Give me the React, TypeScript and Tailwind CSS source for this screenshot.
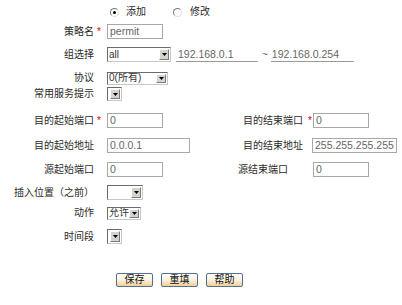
import React from "react";

const Star = () => <span className="text-[#e00000] text-[10px] leading-none">*</span>;

function Select({ w, h = 15, text }: { w: number; h?: number; text?: string }) {
  return (
    <div
      className="flex border border-t-[#6b6b6b] border-l-[#6b6b6b] border-r-[#c8c8c8] border-b-[#c8c8c8] bg-white shrink-0"
      style={{ width: w, height: h }}
    >
      <div className="flex-1 flex items-center pl-[1px] text-[10px] text-[#333] overflow-hidden whitespace-nowrap leading-none">
        {text}
      </div>
      <div className="w-[10px] my-[1px] mr-[1px] flex items-center justify-center bg-[#d6d3ce] border border-t-white border-l-white border-r-[#7b7b7b] border-b-[#7b7b7b] shrink-0">
        <svg width="5" height="3" viewBox="0 0 5 3">
          <path d="M0 0h5L2.5 3z" fill="#000" />
        </svg>
      </div>
    </div>
  );
}

function Input({ w, text }: { w: number; text: string }) {
  return (
    <div
      className="h-[15px] border border-[#a8a8a8] bg-white flex items-center pl-[2px] text-[10.5px] text-[#666] leading-none shrink-0"
      style={{ width: w }}
    >
      {text}
    </div>
  );
}

function Label({ children, star }: { children: React.ReactNode; star?: boolean }) {
  return (
    <>
      <div className="w-[94px] text-right shrink-0 text-[10px] text-[#2a2a2a] leading-none whitespace-nowrap">{children}</div>
      <div className="w-[13px] shrink-0 pl-[3px] flex items-center">{star && <Star />}</div>
    </>
  );
}

function Btn({ children }: { children: React.ReactNode }) {
  return (
    <div className="w-[37px] h-[14px] border border-[#54708f] rounded-[2px] bg-gradient-to-b from-white via-[#fbf1de] to-[#f0cf98] flex items-center justify-center text-[10px] text-[#111] leading-none">
      {children}
    </div>
  );
}

function Radio({ checked }: { checked?: boolean }) {
  return (
    <div className="w-[9px] h-[9px] rounded-full border border-t-[#7a7a7a] border-l-[#7a7a7a] border-r-[#e0e0e0] border-b-[#e0e0e0] bg-white flex items-center justify-center">
      {checked && <div className="w-[3px] h-[3px] rounded-full bg-black" />}
    </div>
  );
}

export default function App() {
  return (
    <div className="w-[402px] h-[305px] bg-white font-['Liberation_Sans','Noto_Sans_CJK_SC',sans-serif] flex flex-col pt-[5px] overflow-hidden">
      <div className="h-[14px] flex items-center pl-[110px] text-[10px] text-[#2a2a2a] leading-none">
        <Radio checked />
        <span className="ml-[7px]">添加</span>
        <div className="ml-[27px]"><Radio /></div>
        <span className="ml-[8px]">修改</span>
      </div>

      <div className="mt-[5px] h-[15px] flex items-center">
        <Label star>策略名</Label>
        <Input w={56} text="permit" />
      </div>

      <div className="mt-[8px] h-[15px] flex items-center">
        <Label>组选择</Label>
        <Select w={64} text="all" />
        <div className="ml-[5px] w-[82px] h-[15px] border-b border-[#9a9a9a] text-[10.5px] text-[#666] leading-none flex items-center pl-[2px]">192.168.0.1</div>
        <span className="ml-[4px] mr-[3px] text-[10px] text-[#666]">~</span>
        <div className="w-[83px] h-[15px] border-b border-[#9a9a9a] text-[10.5px] text-[#666] leading-none flex items-center pl-[1px]">192.168.0.254</div>
      </div>

      <div className="mt-[10px] h-[12px] flex items-center">
        <Label>协议</Label>
        <Select w={61} h={13} text="0(所有)" />
      </div>

      <div className="mt-[3px] h-[14px] flex items-center">
        <Label>常用服务提示</Label>
        <Select w={15} h={14} />
      </div>

      <div className="mt-[12px] h-[15px] flex items-center">
        <div className="w-[238px] flex items-center shrink-0">
          <Label star>目的起始端口</Label>
          <Input w={56} text="0" />
        </div>
        <div className="w-[75px] flex items-center justify-between pl-[5px] pr-[1px] text-[10px] text-[#2a2a2a] leading-none">
          <span>目的结束端口</span>
          <Star />
        </div>
        <Input w={56} text="0" />
      </div>

      <div className="mt-[10px] h-[15px] flex items-center">
        <div className="w-[238px] flex items-center shrink-0">
          <Label>目的起始地址</Label>
          <Input w={83} text="0.0.0.1" />
        </div>
        <div className="w-[74px] pl-[5px] text-[10px] text-[#2a2a2a] leading-none">目的结束地址</div>
        <Input w={85} text="255.255.255.255" />
      </div>

      <div className="mt-[9px] h-[15px] flex items-center">
        <div className="w-[238px] flex items-center shrink-0">
          <Label>源起始端口</Label>
          <Input w={56} text="0" />
        </div>
        <div className="w-[75px] text-[10px] text-[#2a2a2a] leading-none">源结束端口</div>
        <Input w={56} text="0" />
      </div>

      <div className="mt-[8px] h-[15px] flex items-center">
        <Label>插入位置（之前）</Label>
        <Select w={36} />
      </div>

      <div className="mt-[7px] h-[12px] flex items-center">
        <Label>动作</Label>
        <Select w={34} h={13} text="允许" />
      </div>

      <div className="mt-[10px] h-[15px] flex items-center">
        <Label>时间段</Label>
        <Select w={15} />
      </div>

      <div className="mt-[29px] flex items-center pl-[116px] gap-[8px]">
        <Btn>保存</Btn>
        <Btn>重填</Btn>
        <Btn>帮助</Btn>
      </div>
    </div>
  );
}
